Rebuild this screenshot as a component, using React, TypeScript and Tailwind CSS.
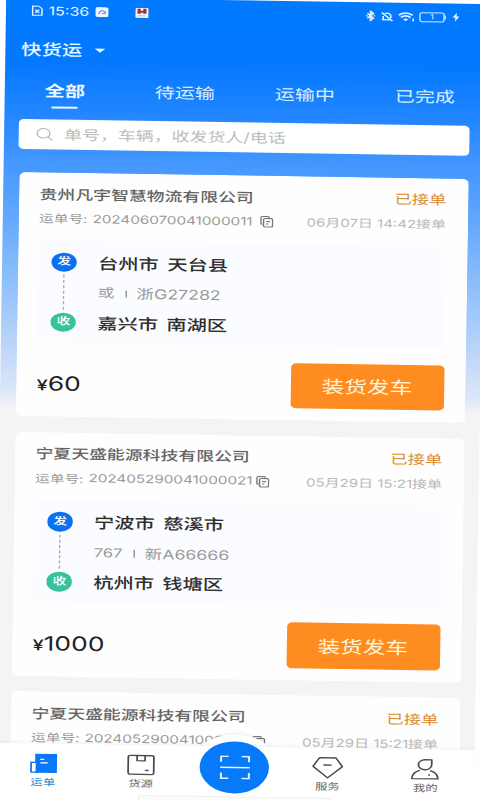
import React from "react";

type Order = {
  company: string;
  code: string;
  accepted: string;
  route?: {
    from: string;
    to: string;
    cargo: string;
    plate: string;
    price: string;
  };
};

const orders: Order[] = [
  {
    company: "贵州凡宇智慧物流有限公司",
    code: "202406070041000011",
    accepted: "06月07日 14:42接单",
    route: { from: "台州市 天台县", to: "嘉兴市 南湖区", cargo: "或", plate: "浙G27282", price: "60" },
  },
  {
    company: "宁夏天盛能源科技有限公司",
    code: "202405290041000021",
    accepted: "05月29日 15:21接单",
    route: { from: "宁波市 慈溪市", to: "杭州市 钱塘区", cargo: "767", plate: "新A66666", price: "1000" },
  },
  {
    company: "宁夏天盛能源科技有限公司",
    code: "202405290041000021",
    accepted: "05月29日 15:21接单",
  },
];

function CopyIcon() {
  return (
    <svg className="ml-[6.2px] h-[12px] w-[10px] shrink-0" viewBox="0 0 10 12" preserveAspectRatio="none" fill="none" stroke="#777" strokeWidth="1.1">
      <path d="M1.8 8.6Q.6 8.6 .6 7.4V1.8Q.6 .8 1.6 .8H5.8Q7 .8 7 2" />
      <rect x="2.6" y="2.8" width="6.8" height="8.4" rx="1.2" />
      <path d="M4.4 5.8H7.4M4.4 8.2H6.2" />
    </svg>
  );
}

function StatusBar() {
  return (
    <div className="flex h-[27.6px] items-center pl-[19.2px] pr-[20px]">
      <svg className="h-[11px] w-[9px]" viewBox="0 0 9 11" fill="none" stroke="#e6f2ff" strokeWidth="1.1">
        <path d="M1 1H5.6L8 3.4V10H1Z" />
        <path d="M3 4.4 6 7.6M6 4.4 3 7.6" />
      </svg>
      <span className="ml-[3.8px] w-[30px] whitespace-nowrap text-[12px] leading-none text-[#e6f4ff]">15:36</span>
      <svg className="ml-[4.6px] h-[10px] w-[10px]" viewBox="0 0 10 10" fill="none">
        <rect width="10" height="10" rx="2" fill="#f2f8ff" />
        <path d="M3 6.8Q2.2 5 3.8 4.4Q5 2.6 6.2 4.2Q8 4.6 7.4 6Q6.6 7 5 6.2" stroke="#3580d8" strokeWidth=".9" />
      </svg>
      <svg className="ml-[20.4px] h-[10.5px] w-[10px]" viewBox="0 0 10 10.5">
        <rect width="10" height="10.5" rx="1.6" fill="#f4f6fb" />
        <path d="M1.6 1H4V6H1.6ZM6 1H8.4V6H6ZM4 3H6V5H4Z" fill="#b8283c" />
        <path d="M3.3 1V5.6M6.7 1V5.6" stroke="#45506e" strokeWidth=".6" />
        <path d="M2 8H8" stroke="#b9bcc8" strokeWidth=".8" />
      </svg>
      <div className="flex-1" />
      <svg className="h-[11px] w-[7px]" viewBox="0 0 7 11" fill="none" stroke="#e6f4ff" strokeWidth="1.3">
        <path d="M1 3 5.6 7.8 3.4 10V1L5.6 3.2 1 8" />
        <path d="M0 5.5H1.2M5.8 5.5H7" />
      </svg>
      <svg className="ml-[4.5px] h-[10.5px] w-[9.5px]" viewBox="0 0 10 11" fill="none" stroke="#e6f4ff" strokeWidth="1.3">
        <path d="M1 8.6H7.6M2 8.6V4.6M3.2 2.4Q5 .8 7 2.4Q8 3.4 8 5V7" />
        <path d="M.8 1 9.4 10" />
      </svg>
      <svg className="ml-[3.5px] h-[10px] w-[12.5px]" viewBox="0 0 12.5 10" fill="none" stroke="#e6f4ff" strokeWidth="1.6">
        <path d="M.6 3.4Q5.8-1.2 11 3.4" />
        <path d="M2.2 5.6Q5.8 2.4 9.4 5.6" />
        <path d="M3.8 7.3Q5.8 5.8 7.8 7.3L5.8 9.4Z" fill="#e6f4ff" stroke="none" />
        <path d="M11.4 6.4V9.6" strokeWidth="1.2" />
      </svg>
      <div className="ml-[3.5px] flex h-[10.4px] w-[18.5px] items-center justify-center rounded-[2px] border border-[#d4ecff] text-[7px] leading-none text-[#e6f4ff]">1</div>
      <div className="h-[4px] w-[1.2px] bg-[#d4ecff]" />
      <svg className="ml-[5px] h-[9px] w-[5px]" viewBox="0 0 5 9" fill="#f0faff">
        <path d="M3.2 0 0 5H2.1L1.7 9 5 3.8H2.9Z" />
      </svg>
    </div>
  );
}

function Header() {
  return (
    <header>
      <StatusBar />
      <div className="flex h-[49px] items-center pl-[11.8px] pt-[1.4px]">
        <span className="text-[15.3px] font-medium leading-none text-[#e9f7ff]">快货运</span>
        <svg className="ml-[9.5px] h-[5px] w-[8px]" viewBox="0 0 8 5" fill="#f0faff">
          <path d="M0 .4H8L4 4.6Z" />
        </svg>
      </div>
      <nav className="flex h-[45px] text-[#d9efff]">
        <div className="flex w-[90px] flex-col items-center">
          <span className="h-[32.4px] text-[15.2px] font-bold leading-[34.4px] text-[#eefaff]">全部</span>
          <span className="h-[1.6px] w-[19.5px] rounded bg-[#e9f7ff]" />
        </div>
        <span className="w-[90px] text-center text-[15px] leading-[34.4px]">待运输</span>
        <span className="w-[90px] text-center text-[15px] leading-[34.4px]">运输中</span>
        <span className="w-[90px] text-center text-[15px] leading-[34.4px]">已完成</span>
      </nav>
      <div className="mx-[11.4px] flex h-[30.4px] items-center rounded-[4px] bg-white pl-[12.2px]">
        <svg className="h-[14px] w-[13px]" viewBox="0 0 13 14" fill="none" stroke="#b5b5b5" strokeWidth="1">
          <circle cx="5.6" cy="6" r="4.8" />
          <path d="M9 9.6 12.4 13" />
        </svg>
        <span className="ml-[8.5px] whitespace-nowrap pt-[2px] text-[13.45px] leading-none text-[#bcbcbc]">单号，车辆，收发货人/电话</span>
      </div>
    </header>
  );
}

function OrderCard({ order }: { order: Order }) {
  const route = order.route;
  return (
    <article className="h-[244px] shrink-0 rounded-[5px] bg-[#fefefe] pl-[15.8px] pr-[16px] pt-[12px]">
      <div className="flex h-[20px] items-center justify-between">
        <span className="whitespace-nowrap pt-px text-[13.4px] font-medium leading-none text-[#646464]">{order.company}</span>
        <span className="text-[13px] leading-none text-[#d98b32]">已接单</span>
      </div>
      <div className="flex h-[29px] items-center whitespace-nowrap text-[11px] leading-none text-[#999]">
        <span className="w-[40px] shrink-0">运单号:</span>
        <span className="w-[120px] shrink-0 text-[11.42px]">{order.code}</span>
        <CopyIcon />
        <span className="flex-1 pt-px text-right text-[11.25px] text-[#b8b8b8]">{order.accepted}</span>
      </div>
      {route && (
        <>
          <div className="mt-[6.6px] flex h-[102.5px] rounded-[4px] bg-[#fbfcff] pl-[9.6px]">
            <div className="flex w-[19.6px] flex-col items-center pt-[12px]">
              <span className="flex size-[19.6px] items-center justify-center rounded-full bg-[#0a72f0] text-[10.4px] font-medium leading-none text-white">发</span>
              <span className="my-[3px] h-[34.4px] w-0 flex-none border-l border-dashed border-[#aaa]" />
              <span className="flex size-[19.6px] items-center justify-center rounded-full bg-[#36c39b] text-[10.4px] font-medium leading-none text-white">收</span>
            </div>
            <div className="ml-[15.6px] flex flex-col whitespace-nowrap pt-[8px] text-[#2e2e2e] [word-spacing:2.2px]">
              <span className="text-[15.2px] font-medium leading-[30px]">{route.from}</span>
              <span className="flex h-[30px] items-center text-[12.4px] leading-none text-[#9a9a9a]">
                {route.cargo}
                <span className="ml-[8.4px] mr-[7.2px] h-[7.6px] w-px bg-[#8c8c8c]" />
                <span className="text-[13.3px]">{route.plate}</span>
              </span>
              <span className="text-[15.2px] font-medium leading-[30px]">{route.to}</span>
            </div>
          </div>
          <div className="mt-[16.6px] flex h-[45.6px] items-center justify-between">
            <span className="flex items-baseline pt-[5px] leading-none text-[#222]">
              <span className="text-[15px] font-medium">¥</span>
              <span className="text-[19.8px]">{route.price}</span>
            </span>
            <button className="h-[45.6px] w-[115px] rounded-[4px] bg-[#fe8c20] pt-[2px] text-[17px] leading-none text-[#fff6dc]">装货发车</button>
          </div>
        </>
      )}
    </article>
  );
}

function NavItem({ label, active, children }: { label: string; active?: boolean; children: React.ReactNode }) {
  return (
    <div className="flex w-[72px] flex-col items-center pt-[8.4px]">
      <svg className="h-[24px] w-[24px]" viewBox="0 0 24 24" fill="none" stroke="#4a4a4a" strokeWidth="1.3" strokeLinejoin="round">
        {children}
      </svg>
      <span className={active ? "mt-[1.5px] text-[9.3px] leading-[10px] text-[#2484d0]" : "mt-[1.5px] text-[9.3px] leading-[10px] text-[#666]"}>{label}</span>
    </div>
  );
}

function BottomNav() {
  return (
    <footer className="relative h-[62px] shrink-0">
      <div className="absolute left-[146.5px] top-[-12.5px] size-[67px] rounded-full bg-white shadow-[0_-1px_3px_rgba(0,0,0,0.08)]" />
      <div className="relative flex h-[62px] justify-between bg-white pl-[0.6px] pr-[0.6px] shadow-[0_-2px_3px_rgba(0,0,0,0.04)]">
        <div className="flex gap-[1.4px]">
          <NavItem label="运单" active>
            <path d="M5.6 2.4H22V21.4H5.6Z" fill="#0a78f8" stroke="none" />
            <path d="M5.6 11H2.6V20.8H8" stroke="#0a78f8" />
            <path d="M5.6 11.6V20" stroke="#fff" strokeWidth=".8" />
            <path d="M9.4 8H12.4M9.4 11.4H15" stroke="#fff" strokeWidth="1.2" />
          </NavItem>
          <NavItem label="货源">
            <rect x="2.4" y="2.6" width="19.2" height="18.8" rx="1.6" />
            <path d="M9 2.6V7.8H15V2.6M15 17.4H17.8" />
          </NavItem>
        </div>
        <div className="flex gap-[1.4px]">
          <NavItem label="服务">
            <path d="M5.8 2H18.2L23 10.6 12 22 1 10.6Z" />
            <path d="M8.8 9.2H15" />
          </NavItem>
          <NavItem label="我的">
            <path d="M17 2.4V7.4A5 5 0 1 1 12 2.4Z" />
            <path d="M8.2 13.2Q2.6 15 2.2 21.4H21.8Q21.4 15 15.8 13.2M14.4 17.6H15.8" />
          </NavItem>
        </div>
      </div>
      <div className="absolute left-[107.5px] top-[49.8px] h-[11px] w-[145px] rounded-[3px] border border-[#f0f0f0] bg-[#fcfcfc]" />
      <div className="absolute left-[154.3px] top-[-4.8px] flex size-[51.5px] items-center justify-center rounded-full bg-[#077afa]">
        <svg className="h-[24px] w-[23px]" viewBox="0 0 23 24" fill="none" stroke="#e6f4ff" strokeWidth="1.5">
          <path d="M1 6.6V1H6.6M16.4 1H22V6.6M22 17.4V23H16.4M6.6 23H1V17.4M.4 12H22.6" />
        </svg>
      </div>
    </footer>
  );
}

export default function App() {
  return (
    <div className="h-[800px] w-[480px] overflow-hidden bg-white [font-family:Inter,'Noto_Sans_CJK_SC',sans-serif]">
      <div className="flex h-[808px] w-[360px] origin-top-left flex-col overflow-hidden bg-[linear-gradient(180deg,#007aff_0px,#0479ff_65px,#1f84ff_110px,#4497ff_165px,#5aa3fd_205px,#93c2fb_292px,#bdd6f9_350px,#dde7f7_395px,#f4f4f5_410px)] [transform:matrix(1.33333,0.0206,-0.0155,1,6.2,-3.3)]">
        <Header />
        <main className="mx-[11.5px] mt-[23px] flex min-h-0 flex-1 flex-col gap-[15.6px] overflow-hidden">
          {orders.map((order, i) => (
            <OrderCard key={i} order={order} />
          ))}
        </main>
        <BottomNav />
      </div>
    </div>
  );
}
